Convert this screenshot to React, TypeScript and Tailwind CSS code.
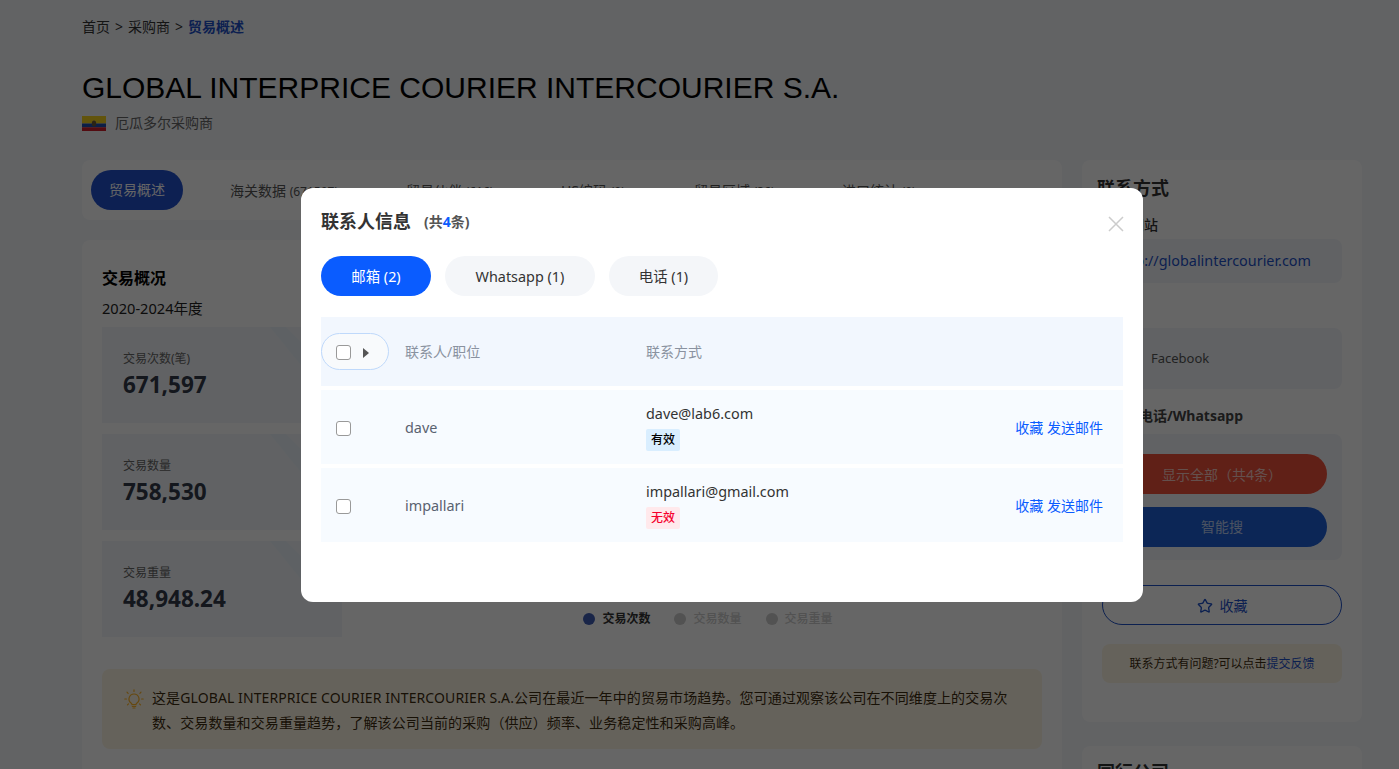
import { Star } from "lucide-react";

const FONT = "font-['Noto_Sans','Noto_Sans_CJK_SC',sans-serif]";

const stats = [
  { label: "交易次数(笔)", value: "671,597" },
  { label: "交易数量", value: "758,530" },
  { label: "交易重量", value: "48,948.24" },
];

const pageTabs = [
  { name: "海关数据", count: "(671597)", w: "w-[176px]" },
  { name: "贸易伙伴", count: "(616)", w: "w-[155px]" },
  { name: "HS编码", count: "(9)", w: "w-[133px]" },
  { name: "贸易区域", count: "(36)", w: "w-[148px]" },
  { name: "进口统计", count: "(9)", w: "w-[120px]" },
];

const contacts = [
  { name: "dave", email: "dave@lab6.com", valid: true },
  { name: "impallari", email: "impallari@gmail.com", valid: false },
];

function EcuadorFlag() {
  return (
    <svg width="24" height="15" viewBox="0 0 24 15" className="block">
      <rect width="24" height="7.5" fill="#f5d31f" />
      <rect y="7.5" width="24" height="3.75" fill="#1f4fb0" />
      <rect y="11.25" width="24" height="3.75" fill="#d0202c" />
      <ellipse cx="12" cy="7.5" rx="2.2" ry="3" fill="#6a5a3a" />
    </svg>
  );
}

function Bulb() {
  return (
    <svg width="20" height="20" viewBox="0 0 20 20" fill="none" stroke="#ffb428" strokeWidth="1.2" strokeLinecap="round">
      <path d="M10 5a5 5 0 0 0-3 9c.6.5 1 1 1 1.6h4c0-.6.4-1.1 1-1.6a5 5 0 0 0-3-9Z" />
      <path d="M8.3 17.5h3.4M9 19h2" />
      <path d="M10 .8v1.6M3 3.2l1.1 1.1M17 3.2l-1.1 1.1M.8 10h1.6M17.6 10h1.6M3.5 15.8l1-1M16.5 15.8l-1-1" />
    </svg>
  );
}

function StatCard({ label, value }: { label: string; value: string }) {
  return (
    <div className="relative h-[96px] w-[240px] overflow-hidden bg-[#f3f6fb] pl-[21px] pt-[23px]">
      {/* diagonal band in the top right corner */}
      <div className="absolute inset-0 bg-[#ebf3fb] [clip-path:polygon(168px_0,184px_0,240px_56px,240px_58px,215px_58px)]" />
      <p className="relative text-xs leading-[18px] text-[#666]">{label}</p>
      <p className="relative mt-[1px] text-[22.5px] font-bold leading-[32px] text-[#333a4a]">{value}</p>
    </div>
  );
}

function Legend({ color, text, active }: { color: string; text: string; active?: boolean }) {
  return (
    <div className="flex items-center gap-[7px]">
      <span className={`h-3 w-3 rounded-full ${color}`} />
      <span className={`text-xs ${active ? "font-bold text-[#333]" : "font-medium text-[#ccc]"}`}>{text}</span>
    </div>
  );
}

function Checkbox() {
  return <span className="block h-[15px] w-[15px] rounded-[3px] border border-[#999] bg-white" />;
}

function ContactModal() {
  return (
    <div className="absolute left-[301px] top-[188px] h-[414px] w-[842px] rounded-xl bg-white px-5 pt-[21px] text-[#333]">
      <div className="flex h-[25px] items-center">
        <h3 className="pb-[2px] text-lg font-bold text-[#333]">联系人信息</h3>
        <span className="ml-[13px] text-sm font-bold text-[#555]">
          (共<span className="text-[#0a5cff]">4</span>条)
        </span>
        <svg width="16" height="16" viewBox="0 0 16 16" className="-mr-px ml-auto mt-[5px]" stroke="#ccc" strokeWidth="1.5">
          <path d="M1 1l14 14M15 1L1 15" />
        </svg>
      </div>

      <div className="mt-[22px] flex gap-[14px] text-[14.4px]">
        <button className="h-10 w-[110px] rounded-full bg-[#0a5cff] pt-[2px] text-white">邮箱 (2)</button>
        <button className="h-10 w-[150px] rounded-full bg-[#f4f6f9] pt-[2px]">Whatsapp (1)</button>
        <button className="h-10 w-[109px] rounded-full bg-[#f4f6f9] pt-[2px]">电话 (1)</button>
      </div>

      <div className="mt-[21px] flex h-[69px] items-center bg-[#f2f7fe] text-sm text-[#8a92a0]">
        <div className="flex h-[37px] w-[68px] items-center gap-[12px] rounded-full border border-[#bfd9fb] bg-[#f8fafc] pl-[14px] pt-[2px]">
          <Checkbox />
          <span className="h-0 w-0 border-y-[5px] border-l-[6px] border-y-transparent border-l-[#555]" />
        </div>
        <span className="ml-[16px] w-[241px]">联系人/职位</span>
        <span>联系方式</span>
      </div>

      {contacts.map((c) => (
        <div key={c.name} className="mt-[4px] flex h-[74px] items-center bg-[#f7fbff]">
          <div className="w-[84px] pl-[15px] pt-[2px]">
            <Checkbox />
          </div>
          <span className="w-[241px] pt-[2px] text-[14.4px] text-[#5a6270]">{c.name}</span>
          <div className="flex flex-col items-start gap-[3px] pb-[2px]">
            <span className="text-[14.4px] leading-[24px]">{c.email}</span>
            <span
              className={`rounded-[2px] px-[5px] text-xs font-medium leading-[22px] ${
                c.valid ? "bg-[#d9eeff] text-black" : "bg-[#ffe9ec] text-[#f5002c]"
              }`}
            >
              {c.valid ? "有效" : "无效"}
            </span>
          </div>
          <span className="ml-auto pr-5 pt-[2px] text-sm text-[#0a5cff]">收藏 发送邮件</span>
        </div>
      ))}
    </div>
  );
}

export default function App() {
  return (
    <div className={`relative h-[769px] overflow-hidden bg-[#f4f7fb] ${FONT}`}>
      <div className="px-[82px] pt-[18px]">
        <nav className="flex gap-[5px] text-sm leading-[18px] text-[#333]">
          <span>首页</span>
          <span>&gt;</span>
          <span>采购商</span>
          <span>&gt;</span>
          <span className="font-bold text-[#1e50c8]">贸易概述</span>
        </nav>
        <h1 className="mt-[34px] font-['Liberation_Sans',sans-serif] text-[30px] leading-[36px] text-black">
          GLOBAL INTERPRICE COURIER INTERCOURIER S.A.
        </h1>
        <div className="mt-[7px] flex items-center gap-[9px] text-sm leading-[20px] text-[#666]">
          <EcuadorFlag />
          <span>厄瓜多尔采购商</span>
        </div>

        <div className="mt-[27px] flex gap-5">
          <main className="w-[980px] shrink-0">
            <div className="flex h-[60px] items-center rounded-lg bg-white pl-[9px] text-sm text-[#555]">
              <span className="mr-[47px] flex h-10 w-[92px] items-center justify-center rounded-full bg-[#2150cd] text-sm text-white">
                贸易概述
              </span>
              {pageTabs.map((t) => (
                <span key={t.name} className={`shrink-0 pt-[2px] ${t.w}`}>
                  {t.name} <span className="text-xs">{t.count}</span>
                </span>
              ))}
            </div>

            <section className="mt-5 h-[560px] rounded-lg bg-white px-5 pt-[27px]">
              <h2 className="text-base font-bold leading-[22px] text-black">交易概况</h2>
              <p className="mt-[9px] text-[14.6px] leading-[20px] text-[#222]">2020-2024年度</p>
              <div className="mt-[9px] flex">
                <div className="flex flex-col gap-[11px]">
                  {stats.map((s) => (
                    <StatCard key={s.label} {...s} />
                  ))}
                </div>
                <div className="flex flex-1 items-end justify-center pb-[10px] pl-[32px]">
                  <div className="flex gap-[24px]">
                    <Legend color="bg-[#3f5db5]" text="交易次数" active />
                    <Legend color="bg-[#ccc]" text="交易数量" />
                    <Legend color="bg-[#ccc]" text="交易重量" />
                  </div>
                </div>
              </div>
              <div className="mt-[32px] flex h-[80px] gap-[8px] rounded-lg bg-[#fdf6e3] pl-[22px] pr-[24px] pt-[16px] text-sm leading-[25px] tracking-[0.1px] text-[#3d2c10]">
                <div className="mt-[4px] shrink-0">
                  <Bulb />
                </div>
                <p>
                  这是GLOBAL INTERPRICE COURIER INTERCOURIER S.A.公司在最近一年中的贸易市场趋势。您可通过观察该公司在不同维度上的交易次数、交易数量和交易重量趋势，了解该公司当前的采购（供应）频率、业务稳定性和采购高峰。
                </p>
              </div>
            </section>
          </main>

          <aside className="w-[280px] shrink-0">
            <div className="h-[562px] rounded-lg bg-white px-5 pt-[15px]">
              <h2 className="-ml-[5px] text-lg font-bold leading-[26px] text-[#333]">联系方式</h2>
              <p className="mt-[14px] text-sm font-medium leading-[20px] text-[#333]">官方网站</p>
              <div className="mt-[4px] flex h-[44px] items-center rounded-lg bg-[#f3f6fb] pl-[14px] text-[14.4px] text-[#1e50c8]">
                http://globalintercourier.com
              </div>
              <p className="mt-[17px] text-sm font-medium leading-[20px] text-[#333]">社媒</p>
              <div className="mt-[8px] flex h-[61px] items-center rounded-lg bg-[#f3f6fb] pl-[49px] text-[13px] text-[#555]">
                Facebook
              </div>
              <p className="mt-[17px] pl-[9px] text-sm font-bold leading-[20px] text-[#444]">联系电话/Whatsapp</p>
              <div className="mt-[8px] flex h-[126px] flex-col gap-[13px] rounded-lg bg-[#f3f6fb] px-[15px] pt-[20px] text-sm">
                <button className="h-10 rounded-full bg-[#f0503a] pt-[2px] text-white/70">显示全部（共4条）</button>
                <button className="h-10 rounded-full bg-[#1e5fd8] text-white/70">智能搜</button>
              </div>
              <button className="mt-[25px] flex h-10 w-full items-center justify-center gap-[7px] rounded-full border border-[#1e50c8] pt-[2px] text-sm text-[#1e50c8]">
                <Star className="h-4 w-4" />
                收藏
              </button>
              <div className="mt-[19px] flex h-[39px] items-center justify-center rounded-lg bg-[#fdf6e3] text-xs text-[#3d2c10]">
                联系方式有问题?可以点击<span className="text-[#1e50c8]">提交反馈</span>
              </div>
            </div>
            <div className="mt-6 h-[200px] rounded-lg bg-white px-5 pt-[12px]">
              <h2 className="-ml-[5px] text-lg font-bold text-[#333]">同行公司</h2>
            </div>
          </aside>
        </div>
      </div>

      <div className="absolute inset-0 bg-black/60" />
      <ContactModal />
    </div>
  );
}
